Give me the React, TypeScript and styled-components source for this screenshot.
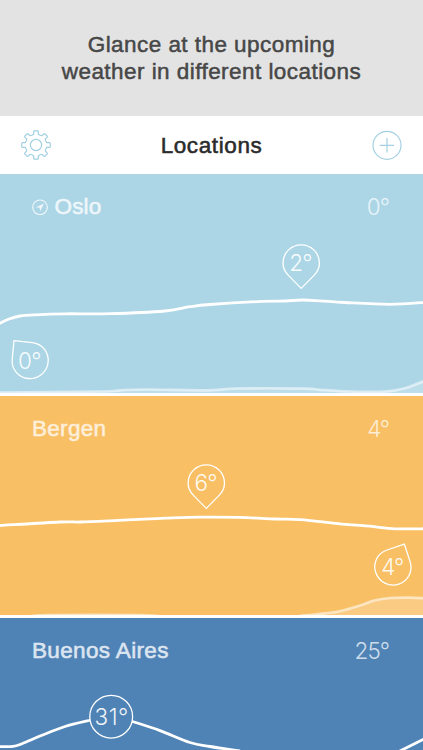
import React from 'react';
import styled, { createGlobalStyle } from 'styled-components';

const GlobalStyle = createGlobalStyle`
  * { box-sizing: border-box; }
  body { margin: 0; background: #4f83b6; overflow: hidden; }
`;

const Screen = styled.div`
  display: flex;
  flex-direction: column;
  width: 423px;
  height: 750px;
  overflow: hidden;
  font-family: 'Liberation Sans', Arial, sans-serif;
`;

const Banner = styled.div`
  flex: 0 0 116px;
  padding-top: 31px;
  background: #e3e3e3;
  color: #474747;
  text-align: center;
`;

const BannerLine = styled.div`
  font-size: 22.5px;
  line-height: 27px;
  letter-spacing: 0.45px;
  -webkit-text-stroke: 0.5px currentColor;
`;

const NavBar = styled.header`
  flex: 0 0 58px;
  display: flex;
  align-items: center;
  justify-content: space-between;
  padding: 0 21px;
  background: #fff;
`;

const Title = styled.h1`
  margin: 2px 0 0;
  font-size: 22.5px;
  font-weight: 400;
  letter-spacing: 0.6px;
  color: #2b2b2b;
  -webkit-text-stroke: 0.55px currentColor;
`;

const IconButton = styled.button`
  display: flex;
  padding: 0;
  border: 0;
  background: none;
  color: #a3d0e2;
`;

const Card = styled.section<{ $color: string }>`
  position: relative;
  display: flow-root;
  flex: 0 0 222px;
  background: ${(p) => p.$color};
  border-bottom: 3px solid #fff;
`;

const CardHeader = styled.div`
  display: flex;
  align-items: center;
  height: 26px;
  margin: 20px 34px 0 32px;
  color: #fff;
`;

const Place = styled.div<{ $spacing: number; $opacity: number }>`
  display: flex;
  align-items: center;
  gap: 6.5px;
  flex: 1;
  font-size: 22.5px;
  letter-spacing: ${(p) => p.$spacing}px;
  opacity: ${(p) => p.$opacity};
  -webkit-text-stroke: 0.55px currentColor;
`;

const Temperature = styled.div`
  padding-bottom: 1px;
  font-family: Inter, sans-serif;
  font-size: 22.5px;
  font-weight: 300;
  letter-spacing: -1px;
  opacity: 0.72;
`;

const Chart = styled.svg`
  position: absolute;
  left: 0;
  top: 0;
  overflow: hidden;
`;

const PinText = styled.text<{ $spacing?: number }>`
  font-family: Inter, sans-serif;
  font-size: 22.5px;
  font-weight: 300;
  letter-spacing: ${(p) => p.$spacing ?? -0.8}px;
  fill: #fff;
  fill-opacity: 0.92;
  text-anchor: middle;
`;

type Point = [number, number];

// Catmull-Rom spline through the samples, written as cubic segments.
function smooth(points: Point[]) {
  let d = `M${points[0][0]} ${points[0][1]}`;
  for (let i = 0; i < points.length - 1; i++) {
    const a = points[Math.max(i - 1, 0)];
    const b = points[i];
    const c = points[i + 1];
    const e = points[Math.min(i + 2, points.length - 1)];
    d += `C${b[0] + (c[0] - a[0]) / 6} ${b[1] + (c[1] - a[1]) / 6} ${c[0] - (e[0] - b[0]) / 6} ${c[1] - (e[1] - b[1]) / 6} ${c[0]} ${c[1]}`;
  }
  return d;
}

function gearPath() {
  const profile: Point[] = [
    [-22.5, 10.6], [-12.5, 11], [-9.5, 13.9], [-7, 14.3], [7, 14.3], [9.5, 13.9], [12.5, 11],
  ];
  const pts: string[] = [];
  for (let i = 0; i < 8; i++) {
    for (const [angle, r] of profile) {
      const t = ((i * 45 + angle) * Math.PI) / 180;
      pts.push(`${(15 + r * Math.sin(t)).toFixed(2)} ${(15 - r * Math.cos(t)).toFixed(2)}`);
    }
  }
  return `M${pts.join('L')}Z`;
}

const GearIcon = () => (
  <svg width="30" height="30" fill="none" stroke="currentColor" strokeWidth="1.2" strokeLinejoin="round">
    <path d={gearPath()} />
    <circle cx="15" cy="15" r="5.6" />
  </svg>
);

const AddIcon = () => (
  <svg width="30" height="30" fill="none" stroke="currentColor" strokeWidth="1.2">
    <circle cx="15" cy="15.3" r="14" />
    <path d="M15 8.1V22.5M7.8 15.3H22.2" />
  </svg>
);

const LocateIcon = () => (
  <svg width="16" height="16" fill="none" stroke="#fff">
    <circle cx="8" cy="8.3" r="7.3" strokeWidth="1.2" />
    <path d="M12 4.5L4 8.2L7.6 8.8L8.2 12.2Z" fill="#fff" stroke="none" />
  </svg>
);

interface PinProps { x: number; y: number; label: string; turn?: number }

const Pin = ({ x, y, label, turn = 0 }: PinProps) => (
  <g transform={`translate(${x} ${y})`}>
    <path
      transform={`rotate(${turn})`}
      d="M0 25.4L-12.8 12.4C-16.4 8.8 -18.2 5 -18.2 0A18.2 18.2 0 0 1 18.2 0C18.2 5 16.4 8.8 12.8 12.4Z"
      fill="none"
      stroke="#fff"
      strokeWidth="1.3"
    />
    <PinText x="-0.7" y="8.2">{label}</PinText>
  </g>
);

interface Location {
  name: string;
  now: string;
  color: string;
  spacing: number;
  opacity: number;
  here?: boolean;
  curves: Point[][];
  rain: Point[][];
  pins: PinProps[];
  peak?: PinProps;
}

const locations: Location[] = [
  {
    name: 'Oslo', now: '0°', color: '#acd6e6', spacing: 0.15, opacity: 0.8, here: true,
    curves: [[[-5, 152], [0, 149.3], [9, 145], [20, 142], [35, 140.8], [65, 139.8], [110, 139.7], [165, 137], [190, 132.7], [210, 130.5], [262, 127.4], [285, 127], [302, 126], [320, 126.8], [345, 128.5], [390, 130.3], [428, 128.2]]],
    rain: [[[0, 218.6], [100, 217.5], [120, 216.3], [145, 215.5], [210, 216.3], [237, 214.5], [305, 214.6], [320, 215.8], [350, 217.5], [385, 217.6], [405, 214.3], [428, 205.5]]],
    pins: [{ x: 301.2, y: 89, label: '2°' }, { x: 30, y: 186.4, label: '0°', turn: 141 }],
  },
  {
    name: 'Bergen', now: '4°', color: '#f8bf65', spacing: 0.3, opacity: 0.75,
    curves: [[[-5, 129.8], [0, 129.5], [60, 126], [80, 126], [110, 124.8], [150, 122.8], [165, 122.2], [200, 121.1], [240, 121.4], [275, 123], [300, 123.6], [345, 128.3], [370, 130.2], [395, 132.8], [428, 132.7]]],
    rain: [
      [[30, 220.5], [48, 219], [140, 219], [160, 220.5]],
      [[300, 220], [325, 217.3], [340, 215.2], [360, 209.5], [375, 204.3], [390, 202], [410, 201.6], [428, 202.3]],
    ],
    pins: [{ x: 206.3, y: 87, label: '6°' }, { x: 393, y: 170.8, label: '4°', turn: 206.5 }],
  },
  {
    name: 'Buenos Aires', now: '25°', color: '#4f83b6', spacing: 0.35, opacity: 0.8,
    curves: [
      [[-5, 128.7], [13, 128.3], [22, 125.7], [42, 117.3], [65, 108.5], [91, 102]],
      [[131, 103], [160, 112.6], [190, 124.5], [210, 128.5], [240, 133]],
      [[390, 138], [406, 130], [428, 119]],
    ],
    rain: [],
    pins: [],
    peak: { x: 111.2, y: 98.7, label: '31°' },
  },
];

const LocationCard = ({ data }: { data: Location }) => (
  <Card $color={data.color}>
    <Chart width="423" height="219">
      {data.rain.map((points, i) => (
        <g key={i}>
          <path d={`${smooth(points)}L${points[points.length - 1][0]} 222L${points[0][0]} 222Z`} fill="#fff" fillOpacity="0.2" />
          <path d={smooth(points)} fill="none" stroke="#fff" strokeOpacity="0.55" strokeWidth="2.7" />
        </g>
      ))}
      {data.curves.map((points, i) => (
        <path key={i} d={smooth(points)} fill="none" stroke="#fff" strokeWidth="2.8" />
      ))}
      {data.pins.map((pin) => <Pin key={pin.label} {...pin} />)}
      {data.peak && (
        <g transform={`translate(${data.peak.x} ${data.peak.y})`}>
          <circle r="21.4" fill={data.color} stroke="#fff" strokeWidth="1.3" />
          <PinText x="0.4" y="8.2" $spacing={0.5}>{data.peak.label}</PinText>
        </g>
      )}
    </Chart>
    <CardHeader>
      <Place $spacing={data.spacing} $opacity={data.opacity}>
        {data.here && <LocateIcon />}
        {data.name}
      </Place>
      <Temperature>{data.now}</Temperature>
    </CardHeader>
  </Card>
);

const Cards = styled.main`
  display: flex;
  flex-direction: column;
`;

export default function App() {
  return (
    <>
      <GlobalStyle />
      <Screen>
        <Banner>
          <BannerLine>Glance at the upcoming</BannerLine>
          <BannerLine>weather in different locations</BannerLine>
        </Banner>
        <NavBar>
          <IconButton aria-label="Settings"><GearIcon /></IconButton>
          <Title>Locations</Title>
          <IconButton aria-label="Add location"><AddIcon /></IconButton>
        </NavBar>
        <Cards>
          {locations.map((data) => <LocationCard key={data.name} data={data} />)}
        </Cards>
      </Screen>
    </>
  );
}
